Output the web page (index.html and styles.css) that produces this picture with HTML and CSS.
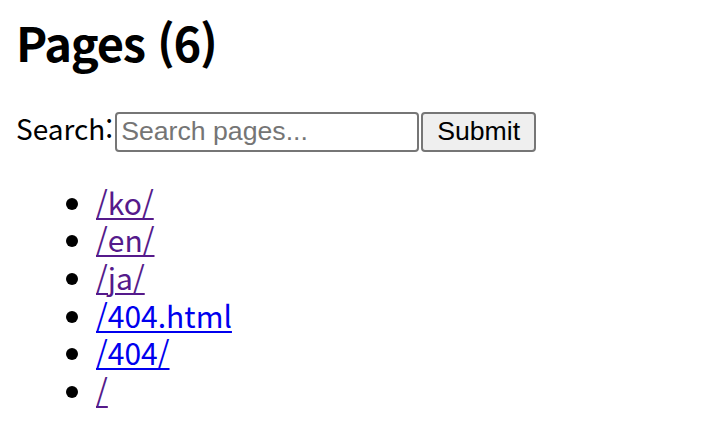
FILE: index.html
```html
<!DOCTYPE html>
<html lang="ko">
<head>
<meta charset="utf-8">
<title>Pages</title>
<link rel="stylesheet" href="styles.css">
</head>
<body>
<h2 class="title">Pages (6)</h2>
<form class="search">
  <label class="search-label" for="q">Search:</label>
  <input class="search-input" id="q" type="text" placeholder="Search pages...">
  <button class="search-btn" type="submit">Submit</button>
</form>
<ul class="pages">
  <li><a class="visited" href="#ko">/ko/</a></li>
  <li><a class="visited" href="#en">/en/</a></li>
  <li><a class="visited" href="#ja">/ja/</a></li>
  <li><a class="fresh" href="#404html">/404.html</a></li>
  <li><a class="fresh" href="#404">/404/</a></li>
  <li><a class="visited" href="#root">/</a></li>
</ul>
</body>
</html>
```
FILE: styles.css
```css
html, body {
  margin: 0;
  padding: 0;
  background: #fff;
}
body {
  padding: 0 16px;
  font-family: "Noto Sans CJK KR", "Noto Sans", sans-serif;
  font-size: 28px;
  color: #000;
}
.title {
  margin: 12px 0 0;
  font-size: 47px;
  line-height: 60px;
  font-weight: 700;
  letter-spacing: -1.2px;
}
.search {
  display: flex;
  align-items: baseline;
  margin-top: 36px;
}
.search-label {
  line-height: 40px;
}
.search-input {
  box-sizing: border-box;
  width: 304px;
  height: 40px;
  margin: 0 2px 0 2px;
  padding: 2px 4px;
  border: 2px solid #767676;
  border-radius: 4px;
  font-family: "Liberation Sans", Arial, sans-serif;
  font-size: 26.67px;
  color: #000;
  background: #fff;
}
.search-input::placeholder {
  color: #757575;
}
.search-btn {
  box-sizing: border-box;
  height: 40px;
  width: 115px;
  padding: 2px 12px;
  border: 2px solid #767676;
  border-radius: 4px;
  background: #efefef;
  font-family: "Liberation Sans", Arial, sans-serif;
  font-size: 26.67px;
  color: #000;
}
.pages {
  margin: 32px 0 0;
  padding-left: 80px;
  list-style: disc;
  font-size: 30px;
}
.pages li {
  line-height: 37.7px;
}
.pages a {
  text-decoration: underline;
  text-decoration-thickness: 2px;
  text-underline-offset: 3px;
}
.pages a.visited {
  color: #551a8b;
}
.pages a.fresh {
  color: #0000ee;
}
```
